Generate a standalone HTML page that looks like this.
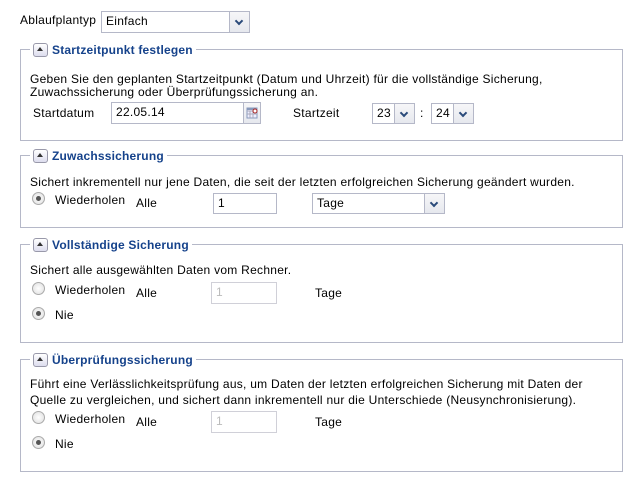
<!DOCTYPE html>
<html><head><meta charset="utf-8"><style>
body{margin:0;width:629px;height:479px;background:#fff;font-family:"Liberation Sans",Tahoma,sans-serif;font-size:12px;letter-spacing:0.27px;color:#000;position:relative;overflow:hidden}
.a{position:absolute;white-space:nowrap;line-height:14px}
.box{position:absolute;border:1px solid #b5b8c8;left:20px;width:601px}
.leg{position:absolute;background:#fff;padding:0 3px 0 3px;left:30px;height:16px;display:flex;align-items:center}
.tb{width:13px;height:12px;border:1px solid #99a;border-radius:3px;background:linear-gradient(#fff,#dde);position:relative;margin-right:4px}
.tb:after{content:"";position:absolute;left:3px;top:3px;border-left:3px solid transparent;border-right:3px solid transparent;border-bottom:4px solid #333}
.leg b{color:#15428b;font-size:12px;letter-spacing:0.2px}
.inp{position:absolute;border:1px solid #b5b8c8;background:#fff;height:20px;box-sizing:border-box;padding:2px 4px;line-height:15px}
.dis{color:#bbb;border-color:#d0d0d8}
.trig{position:absolute;right:0;top:0;bottom:0;width:19px;border-left:1px solid #b5b8c8;background:linear-gradient(#f6f6f8,#e6e8ee)}
.trig:after{content:"";position:absolute;left:6px;top:6px;width:4px;height:4px;border-right:2px solid #2a4a7a;border-bottom:2px solid #2a4a7a;transform:rotate(45deg)}
.cal:after{display:none}
.rad{position:absolute;width:11px;height:11px;border-radius:50%;border:1px solid #aaa;background:radial-gradient(#fff,#ddd)}
.rad.on:after{content:"";position:absolute;left:3px;top:3px;width:5px;height:5px;border-radius:50%;background:#555}
</style></head><body>
<div class="a" style="left:20px;top:13px">Ablaufplantyp</div>
<div class="inp" style="left:101px;top:11px;width:149px;height:22px">Einfach<div class="trig"></div></div>

<div class="box" style="top:49px;height:90px"></div>
<div class="leg" style="top:42px"><div class="tb"></div><b>Startzeitpunkt festlegen</b></div>
<div class="a" style="left:30px;top:72px">Geben Sie den geplanten Startzeitpunkt (Datum und Uhrzeit) für die vollständige Sicherung,</div>
<div class="a" style="left:30px;top:85px">Zuwachssicherung oder Überprüfungssicherung an.</div>
<div class="a" style="left:33px;top:106px">Startdatum</div>
<div class="inp" style="left:111px;top:102px;width:150px;height:22px">22.05.14<div class="trig cal" style="width:16px"><svg width="16" height="20" style="position:absolute;left:0;top:0"><rect x="3" y="5" width="10" height="10" fill="#eef" stroke="#8899bb"/><path d="M3 8H13M6 8V15M9 8V15M3 11H13" stroke="#aab" fill="none"/><rect x="3" y="5" width="10" height="2" fill="#8899bb"/><circle cx="11" cy="8" r="2" fill="#fff" stroke="#a22"/></svg></div></div>
<div class="a" style="left:293px;top:106px">Startzeit</div>
<div class="inp" style="left:372px;top:103px;width:43px;height:21px">23<div class="trig"></div></div>
<div class="a" style="left:420px;top:106px">:</div>
<div class="inp" style="left:431px;top:103px;width:43px;height:21px">24<div class="trig"></div></div>

<div class="box" style="top:155px;height:71px"></div>
<div class="leg" style="top:148px"><div class="tb"></div><b>Zuwachssicherung</b></div>
<div class="a" style="left:30px;top:175px">Sichert inkrementell nur jene Daten, die seit der letzten erfolgreichen Sicherung geändert wurden.</div>
<div class="rad on" style="left:32px;top:192px"></div>
<div class="a" style="left:55px;top:193px">Wiederholen</div>
<div class="a" style="left:136px;top:196px">Alle</div>
<div class="inp" style="left:213px;top:193px;width:64px;height:21px">1</div>
<div class="inp" style="left:312px;top:193px;width:133px;height:21px">Tage<div class="trig"></div></div>

<div class="box" style="top:244px;height:97px"></div>
<div class="leg" style="top:237px"><div class="tb"></div><b>Vollständige Sicherung</b></div>
<div class="a" style="left:30px;top:263px">Sichert alle ausgewählten Daten vom Rechner.</div>
<div class="rad" style="left:32px;top:282px"></div>
<div class="a" style="left:55px;top:283px">Wiederholen</div>
<div class="a" style="left:136px;top:286px">Alle</div>
<div class="inp dis" style="left:211px;top:282px;width:66px;height:22px">1</div>
<div class="a" style="left:315px;top:286px">Tage</div>
<div class="rad on" style="left:32px;top:307px"></div>
<div class="a" style="left:55px;top:308px">Nie</div>

<div class="box" style="top:359px;height:111px"></div>
<div class="leg" style="top:352px"><div class="tb"></div><b>Überprüfungssicherung</b></div>
<div class="a" style="left:30px;top:377px">Führt eine Verlässlichkeitsprüfung aus, um Daten der letzten erfolgreichen Sicherung mit Daten der</div>
<div class="a" style="left:30px;top:393px">Quelle zu vergleichen, und sichert dann inkrementell nur die Unterschiede (Neusynchronisierung).</div>
<div class="rad" style="left:32px;top:411px"></div>
<div class="a" style="left:55px;top:412px">Wiederholen</div>
<div class="a" style="left:136px;top:415px">Alle</div>
<div class="inp dis" style="left:211px;top:411px;width:66px;height:22px">1</div>
<div class="a" style="left:315px;top:415px">Tage</div>
<div class="rad on" style="left:32px;top:436px"></div>
<div class="a" style="left:55px;top:437px">Nie</div>
</body></html>
